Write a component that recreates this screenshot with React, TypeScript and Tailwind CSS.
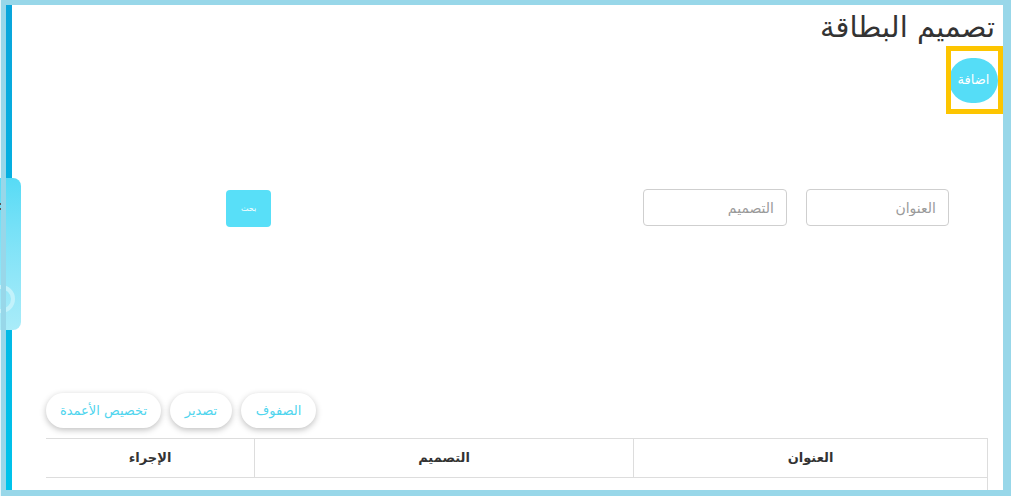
import React from "react";

const FONT = { fontFamily: '"DejaVu Sans", "Liberation Sans", sans-serif' };

const SidebarHandle: React.FC = () => (
  <div className="absolute left-0 top-[178px] z-10 w-[21px] h-[152px] rounded-r-[8px] bg-gradient-to-b from-[#56dbf6] to-[#a9ecf9] overflow-hidden">
    <div className="absolute left-0 top-[25px] w-[2px] h-[2px] bg-[#555]" />
    <div className="absolute left-0 top-[30px] w-[2px] h-[2px] bg-[#555]" />
    <svg className="absolute left-[-14px] top-[106px]" width="30" height="30" viewBox="0 0 30 30">
      <circle cx="15" cy="15" r="12" fill="none" stroke="#c2f2fb" strokeWidth="4" />
    </svg>
  </div>
);

const PillButton: React.FC<{ label: string; width: string }> = ({ label, width }) => (
  <button
    className={`${width} h-[35px] rounded-full bg-white text-[13px] text-[#4fd5ee] shadow-[0_2px_6px_rgba(0,0,0,0.25)]`}
  >
    {label}
  </button>
);

const SearchInput: React.FC<{ placeholder: string; width: string }> = ({ placeholder, width }) => (
  <input
    dir="rtl"
    placeholder={placeholder}
    className={`${width} h-[37px] rounded-[4px] border border-[#cfcfcf] px-3 text-[14px] placeholder:text-[#9a9a9a] outline-none`}
    style={FONT}
  />
);

export default function App() {
  return (
    <div className="relative flex w-[1011px] h-[496px] bg-white overflow-hidden" style={FONT}>
      <SidebarHandle />
      <div className="w-[1px] h-full bg-[#e4f5fa]" />
      <div className="relative z-20 w-[5px] h-full bg-[#98d7e9]" />
      <div className="flex-1 flex flex-col">
        <div className="h-[5px] bg-[#98d7e9]" />
        <div className="flex-1 flex min-h-0">
          <div className="w-[6px] bg-gradient-to-b from-[#0aa5db] to-[#00c3eb]" />
          <div dir="rtl" className="flex-1 flex flex-col min-w-0">
            <div className="h-[41px] pr-[8px] pt-[3px]">
              <h1 className="text-[29px] leading-[38px] text-[#333333]">تصميم البطاقة</h1>
            </div>

            <div className="flex">
              <div className="w-[57px] h-[68px] border-[5px] border-[#fdc500] flex items-center overflow-hidden">
                <button className="shrink-0 w-[49px] h-[45px] rounded-full bg-[#55ddf7] text-white text-[13px] flex items-center justify-center">
                  اضافة
                </button>
              </div>
            </div>

            <div className="flex items-center mt-[74px] pr-[54px]">
              <SearchInput placeholder="العنوان" width="w-[143px]" />
              <div className="w-[19px]" />
              <SearchInput placeholder="التصميم" width="w-[144px]" />
              <div className="w-[372px]" />
              <button className="w-[45px] h-[37px] mt-[2px] rounded-[4px] bg-[#58dff8] text-white text-[8px]">
                بحث
              </button>
            </div>

            <div className="flex gap-[9px] mt-[166px] pr-[687px]">
              <PillButton label="الصفوف" width="w-[75px]" />
              <PillButton label="تصدير" width="w-[62px]" />
              <PillButton label="تخصيص الأعمدة" width="w-[115px]" />
            </div>

            <div className="mt-[10px] mr-[15px] ml-[34px] border-t border-r border-[#dddddd] flex-1">
              <div className="flex h-[39px] border-b border-[#dddddd] text-[13px] font-bold text-[#333333]">
                <div className="w-[354px] border-l border-[#dddddd] flex items-center justify-center">العنوان</div>
                <div className="w-[379px] border-l border-[#dddddd] flex items-center justify-center">التصميم</div>
                <div className="flex-1 flex items-center justify-center">الإجراء</div>
              </div>
            </div>
          </div>
          <div className="w-[8px] bg-[#98d7e9]" />
        </div>
        <div className="h-[6px] bg-[#98d7e9]" />
      </div>
    </div>
  );
}
